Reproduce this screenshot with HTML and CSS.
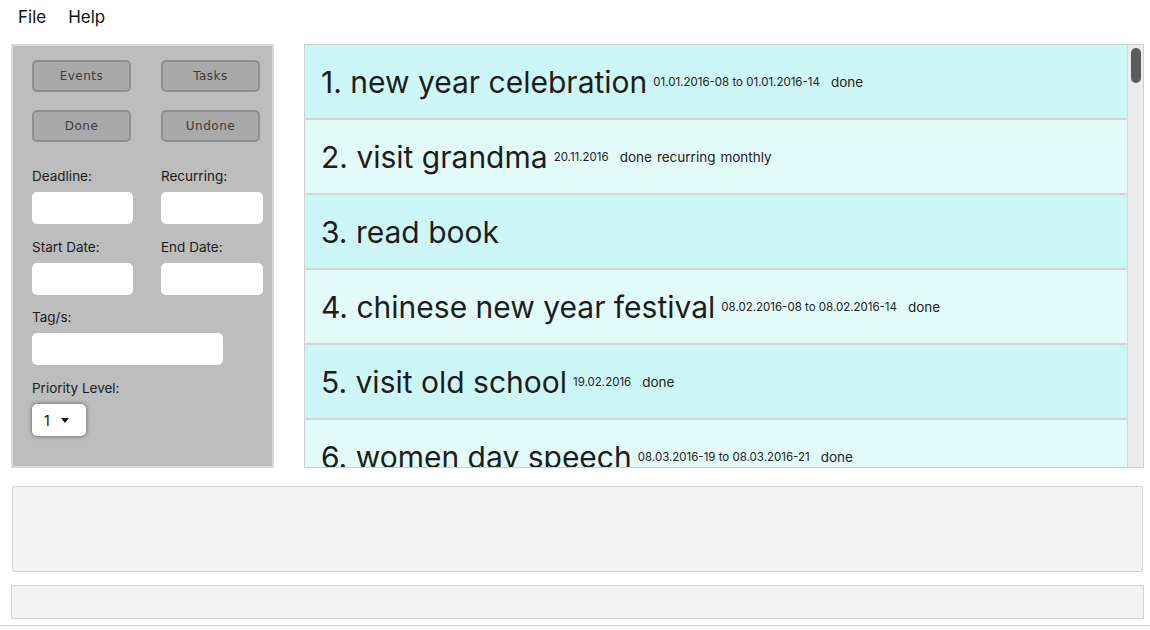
FILE: index.html
```html
<!DOCTYPE html>
<html>
<head>
<meta charset="utf-8">
<link rel="stylesheet" href="styles.css">
</head>
<body>
<div class="menubar">
  <span class="menu-item">File</span>
  <span class="menu-item">Help</span>
</div>
<div class="main">
  <div class="side">
    <div class="btn-grid">
      <button class="btn">Events</button>
      <button class="btn">Tasks</button>
      <button class="btn">Done</button>
      <button class="btn">Undone</button>
    </div>
    <div class="field-grid">
      <div class="field"><label>Deadline:</label><div class="input"></div></div>
      <div class="field"><label>Recurring:</label><div class="input"></div></div>
      <div class="field"><label>Start Date:</label><div class="input"></div></div>
      <div class="field"><label>End Date:</label><div class="input"></div></div>
    </div>
    <div class="field tag-field"><label>Tag/s:</label><div class="input wide"></div></div>
    <div class="field priority-field"><label>Priority Level:</label>
      <div class="select"><span>1</span><span class="caret"></span></div>
    </div>
  </div>
  <div class="list">
    <div class="rows">
      <div class="row odd"><span class="title">1. new year celebration</span><span class="date">01.01.2016-08 to 01.01.2016-14</span><span class="meta">done</span></div>
      <div class="row even"><span class="title">2. visit grandma</span><span class="date">20.11.2016</span><span class="meta">done</span><span class="meta tight">recurring</span><span class="meta tight">monthly</span></div>
      <div class="row odd"><span class="title">3. read book</span></div>
      <div class="row even"><span class="title">4. chinese new year festival</span><span class="date">08.02.2016-08 to 08.02.2016-14</span><span class="meta">done</span></div>
      <div class="row odd"><span class="title">5. visit old school</span><span class="date">19.02.2016</span><span class="meta">done</span></div>
      <div class="row even"><span class="title">6. women day speech</span><span class="date">08.03.2016-19 to 08.03.2016-21</span><span class="meta">done</span></div>
    </div>
    <div class="scrollbar"><div class="thumb"></div></div>
  </div>
</div>
<div class="result-box"></div>
<div class="command-box"></div>
<div class="status"></div>
</body>
</html>
```
FILE: styles.css
```css
* { box-sizing: border-box; }
html, body { margin: 0; padding: 0; }
body {
  width: 1150px;
  height: 630px;
  overflow: hidden;
  background: #ffffff;
  font-family: Inter, "Liberation Sans", Arial, sans-serif;
  color: #222;
}
.menubar {
  height: 34px;
  display: flex;
  align-items: center;
  padding-left: 18px;
  gap: 22px;
  font-size: 17px;
  color: #111;
}
.main {
  display: flex;
  padding-left: 11px;
  gap: 30px;
  margin-top: 10px;
  height: 424px;
}
.side {
  width: 263px;
  height: 424px;
  background: #bdbdbd;
  border: 2px solid #d9d9d9;
  padding: 14px 0 0 19px;
}
.btn-grid {
  display: grid;
  grid-template-columns: 99px 99px;
  column-gap: 30px;
  row-gap: 18px;
}
.btn {
  height: 32px;
  background: #a9a9a9;
  border: 2px solid #8e8e8e;
  border-radius: 5px;
  font-family: "DejaVu Sans", sans-serif;
  font-size: 12px;
  letter-spacing: 0.5px;
  color: #3c3c3c;
  padding: 0;
}
.field-grid {
  display: grid;
  grid-template-columns: 101px 102px;
  column-gap: 28px;
  margin-top: 25px;
  row-gap: 14px;
}
.field { display: flex; flex-direction: column; }
.field > label {
  font-size: 13.5px;
  color: #1a1a1a;
  height: 18px;
  line-height: 18px;
  margin-bottom: 7px;
}
.input {
  height: 32px;
  background: #fff;
  border-radius: 5px;
}
.input.wide { width: 191px; }
.tag-field { margin-top: 13px; }
.priority-field { margin-top: 14px; }
.select {
  width: 54px;
  height: 32px;
  background: #fff;
  border-radius: 5px;
  box-shadow: 0 0 4px rgba(0,0,0,0.55);
  display: flex;
  align-items: center;
  padding-left: 12px;
  gap: 11px;
  font-size: 14px;
  color: #111;
}
.caret {
  width: 0; height: 0;
  border-left: 4px solid transparent;
  border-right: 4px solid transparent;
  border-top: 5px solid #111;
}
.list {
  width: 840px;
  height: 424px;
  border: 1px solid #cfcfcf;
  display: flex;
  overflow: hidden;
}
.rows { flex: 1; overflow: hidden; }
.row {
  height: 75px;
  border-bottom: 2px solid #d4d4d4;
  display: flex;
  align-items: center;
  padding: 1px 0 0 16px;
}
.row.odd { background: #cdf7f6; }
.row.even { background: #e3fbf8; }
.title {
  font-size: 30px;
  color: #1d1d1d;
  line-height: 36px;
}
.date {
  font-size: 11.5px;
  color: #222;
  margin-left: 6px;
}
.meta {
  font-size: 13.5px;
  color: #222;
  margin-left: 11px;
}
.meta.tight { margin-left: 5px; }
.scrollbar {
  width: 16px;
  background: #ececec;
  border-left: 1px solid #d8d8d8;
  position: relative;
}
.thumb {
  position: absolute;
  left: 3px;
  top: 3px;
  width: 10px;
  height: 35px;
  border-radius: 5px;
  background: #5c5c5c;
}
.result-box {
  margin: 18px 0 0 12px;
  width: 1131px;
  height: 86px;
  background: #f3f3f3;
  border: 1px solid #d3d3d3;
  border-radius: 2px;
}
.command-box {
  margin: 13px 0 0 11px;
  width: 1133px;
  height: 34px;
  background: #f3f3f3;
  border: 1px solid #d3d3d3;
}
.status {
  margin-top: 6px;
  height: 10px;
  border-top: 1px solid #d6d6d6;
  background: #f8f8f8;
}
```
